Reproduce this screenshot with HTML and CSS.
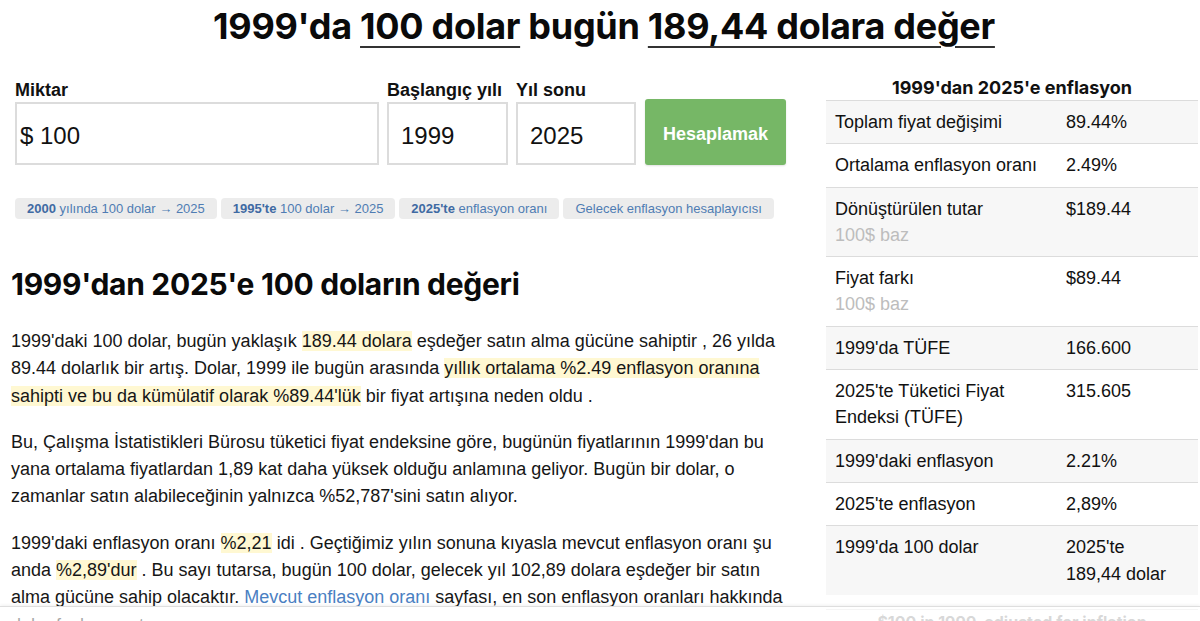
FILE: index.html
```html
<!DOCTYPE html>
<html lang="tr">
<head>
<meta charset="utf-8">
<title>1999'da 100 dolar bugün</title>
<link rel="stylesheet" href="styles.css">
</head>
<body>
<header class="top">
  <h1 class="title">1999'da <span class="u">100 dolar</span> bugün <span class="u">189,44 dolara değer</span></h1>
</header>
<main class="layout">
  <section class="left">
    <form class="calc">
      <div class="field f-amount">
        <label class="lbl">Miktar</label>
        <div class="box">$ 100</div>
      </div>
      <div class="field f-year">
        <label class="lbl">Başlangıç yılı</label>
        <div class="box">1999</div>
      </div>
      <div class="field f-year2">
        <label class="lbl">Yıl sonu</label>
        <div class="box">2025</div>
      </div>
      <button type="button" class="btn">Hesaplamak</button>
    </form>
    <div class="chips">
      <a class="chip"><b>2000</b> yılında 100 dolar → 2025</a>
      <a class="chip"><b>1995'te</b> 100 dolar → 2025</a>
      <a class="chip"><b>2025'te</b> enflasyon oranı</a>
      <a class="chip">Gelecek enflasyon hesaplayıcısı</a>
    </div>
    <h2 class="h2">1999'dan 2025'e 100 doların değeri</h2>
    <p class="p">1999'daki 100 dolar, bugün yaklaşık <mark>189.44 dolara</mark> eşdeğer satın alma gücüne sahiptir , 26 yılda 89.44 dolarlık bir artış. Dolar, 1999 ile bugün arasında <mark>yıllık ortalama %2.49 enflasyon oranına sahipti ve bu da kümülatif olarak %89.44'lük</mark> bir fiyat artışına neden oldu .</p>
    <p class="p">Bu, Çalışma İstatistikleri Bürosu tüketici fiyat endeksine göre, bugünün fiyatlarının 1999'dan bu yana ortalama fiyatlardan 1,89 kat daha yüksek olduğu anlamına geliyor. Bugün bir dolar, o zamanlar satın alabileceğinin yalnızca %52,787'sini satın alıyor.</p>
    <p class="p">1999'daki enflasyon oranı <mark>%2,21</mark> idi . Geçtiğimiz yılın sonuna kıyasla mevcut enflasyon oranı şu anda <mark>%2,89'dur</mark> . Bu sayı tutarsa, bugün 100 dolar, gelecek yıl 102,89 dolara eşdeğer bir satın alma gücüne sahip olacaktır. <a class="link">Mevcut enflasyon oranı</a> sayfası, en son enflasyon oranları hakkında daha fazla ayrıntı sunar .</p>
  </section>
  <aside class="right">
    <div class="tcap">1999'dan 2025'e enflasyon</div>
    <table class="tbl">
      <tr><td class="k">Toplam fiyat değişimi</td><td class="v">89.44%</td></tr>
      <tr><td class="k">Ortalama enflasyon oranı</td><td class="v">2.49%</td></tr>
      <tr><td class="k">Dönüştürülen tutar<div class="sub">100$ baz</div></td><td class="v">$189.44</td></tr>
      <tr><td class="k">Fiyat farkı<div class="sub">100$ baz</div></td><td class="v">$89.44</td></tr>
      <tr><td class="k">1999'da TÜFE</td><td class="v">166.600</td></tr>
      <tr><td class="k">2025'te Tüketici Fiyat Endeksi (TÜFE)</td><td class="v">315.605</td></tr>
      <tr><td class="k">1999'daki enflasyon</td><td class="v">2.21%</td></tr>
      <tr><td class="k">2025'te enflasyon</td><td class="v">2,89%</td></tr>
      <tr><td class="k">1999'da 100 dolar</td><td class="v">2025'te 189,44 dolar</td></tr>
    </table>
    <div class="chart-cap">$100 in 1999, adjusted for inflation</div>
  </aside>
</main>
<div class="bottombar"></div>
</body>
</html>
```
FILE: styles.css
```css
* { box-sizing: border-box; }
html, body { margin: 0; padding: 0; background: #fff; }
body {
  font-family: "Liberation Sans", Arial, sans-serif;
  color: #111;
  font-size: 18px;
}
.top {
  height: 76px;
  padding: 4px 0 0 8px;
  text-align: center;
}
.title {
  margin: 0;
  font-family: Inter, "Noto Sans", sans-serif;
  font-weight: 700;
  font-size: 36px;
  line-height: 44px;
  letter-spacing: -0.008em;
  color: #0a0a0a;
}
.title .u {
  text-decoration: underline;
  text-decoration-thickness: 2px;
  text-underline-offset: 7px;
  text-decoration-color: #333;
}
.layout {
  display: grid;
  grid-template-columns: 784px 372px;
  column-gap: 31px;
  padding-left: 11px;
}
.calc {
  display: flex;
  align-items: flex-end;
  margin-left: 4px;
  padding-top: 3px;
}
.field { display: flex; flex-direction: column; }
.lbl {
  font-weight: 700;
  font-size: 18px;
  line-height: 22px;
  margin-bottom: 1px;
  white-space: nowrap;
  font-family: "Liberation Sans", Arial, sans-serif;
}
.box {
  height: 63px;
  border: 2px solid #dcdcdc;
  font-size: 24px;
  line-height: 64px;
  padding-left: 3px;
  font-family: "Liberation Sans", Arial, sans-serif;
  color: #111;
}
.f-amount .box { width: 364px; }
.f-year { margin-left: 8px; }
.f-year .box { width: 121px; padding-left: 12px; }
.f-year2 { margin-left: 8px; }
.f-year2 .box { width: 120px; padding-left: 12px; }
.btn {
  margin-left: 9px;
  width: 141px;
  height: 66px;
  background: #76b766;
  border: 0;
  border-radius: 3px;
  color: #fff;
  font-family: "Liberation Sans", Arial, sans-serif;
  font-weight: 700;
  font-size: 18px;
  padding-top: 6px;
  box-shadow: 0 1px 2px rgba(0,0,0,0.12);
}
.chips {
  display: flex;
  gap: 4px;
  margin: 33px 0 0 4px;
}
.chip {
  display: block;
  height: 21px;
  line-height: 21px;
  padding: 0 12px;
  background: #ececec;
  border-radius: 4px;
  font-size: 13px;
  color: #4f7cb3;
  white-space: nowrap;
}
.chip b { font-weight: 700; color: #3f6aa3; }
.h2 {
  margin: 47px 0 26px;
  font-family: Inter, "Noto Sans", sans-serif;
  font-weight: 700;
  font-size: 30px;
  line-height: 36px;
  letter-spacing: -0.01em;
  color: #0a0a0a;
}
.p {
  margin: 0 0 19px;
  font-size: 18px;
  line-height: 27.3px;
  color: #161616;
}
mark { background: #fff8d2; color: inherit; }
.link { color: #4a80c2; }
.tcap {
  font-family: Inter, "Noto Sans", sans-serif;
  font-weight: 700;
  font-size: 18px;
  line-height: 24px;
  text-align: center;
  height: 24px;
  color: #111;
}
.tbl {
  width: 100%;
  border-collapse: collapse;
  font-size: 18px;
  line-height: 26.3px;
}
.tbl tr { border-top: 1px solid #dcdcdc; }
.tbl tr:nth-child(odd) { background: #f7f7f7; }
.tbl td { vertical-align: top; padding: 8px 9px; }
.tbl .k { width: 231px; }
.tbl .v { padding-right: 20px; }
.sub { color: #bdbdbd; }
.chart-cap {
  margin-top: 14px;
  text-align: center;
  font-family: Inter, "Noto Sans", sans-serif;
  font-weight: 700;
  font-size: 16px;
  color: #999;
  border-top: 1px solid #e4e4e4;
  padding-top: 2px;
}
.bottombar {
  position: fixed;
  left: 0;
  right: 0;
  bottom: 0;
  height: 15px;
  background: rgba(255,255,255,0.62);
  border-top: 1px solid #dedede;
  box-shadow: 0 -1px 3px rgba(0,0,0,0.06);
}
```
